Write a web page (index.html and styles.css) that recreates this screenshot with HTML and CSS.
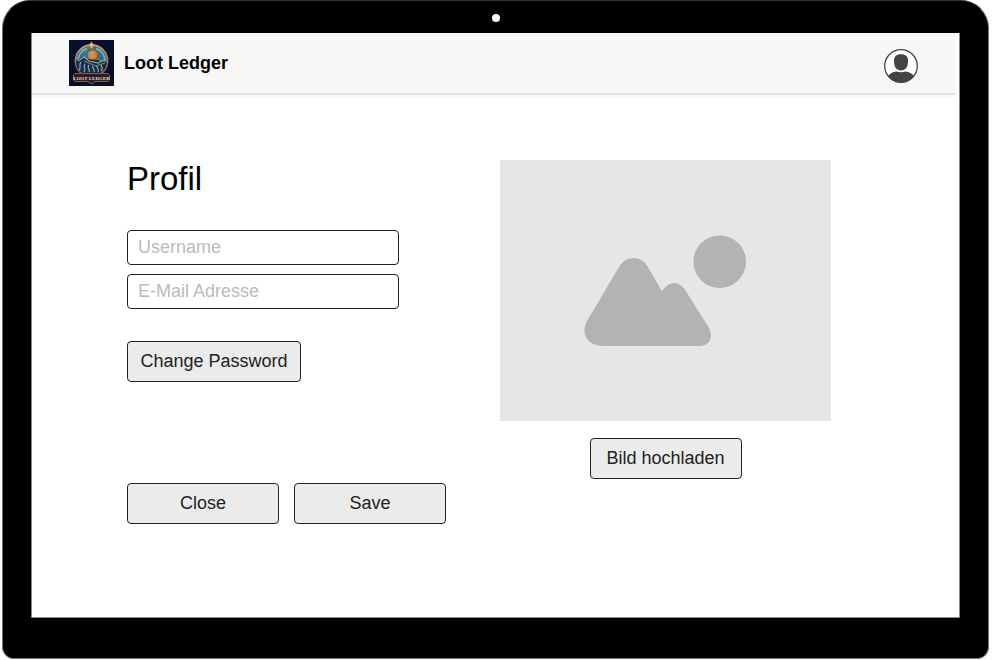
FILE: index.html
```html
<!DOCTYPE html>
<html lang="de">
<head>
<meta charset="utf-8">
<meta name="viewport" content="width=device-width, initial-scale=1">
<title>Loot Ledger</title>
<link rel="stylesheet" href="styles.css">
</head>
<body>
<div class="device">
  <div class="bezel"><span class="camera"></span></div>
  <div class="screen">
    <header class="topbar">
      <a class="brand" href="#">
        <svg class="logo" viewBox="0 0 45 46" aria-hidden="true">
          <defs>
            <linearGradient id="gold" x1="0" y1="0" x2="0" y2="1">
              <stop offset="0" stop-color="#c99a5c"/>
              <stop offset="1" stop-color="#85543a"/>
            </linearGradient>
            <radialGradient id="sea" cx=".5" cy=".3" r=".75">
              <stop offset="0" stop-color="#4a8c9a"/>
              <stop offset=".6" stop-color="#265f80"/>
              <stop offset="1" stop-color="#102746"/>
            </radialGradient>
          </defs>
          <rect width="45" height="46" fill="#06102e"/>
          <circle cx="22.500" cy="21" r="16" fill="url(#sea)" stroke="url(#gold)" stroke-width="1.800"/>
          <path d="M9 21a13.500 13.500 0 0 1 9-12.500M27 8.500a13.500 13.500 0 0 1 9 12.500" fill="none" stroke="#62b5c6" stroke-width="2"/>
          <path d="M22.500 1.500l3 4-3 3.500-3-3.500z" fill="#d99c49"/>
          <circle cx="22.500" cy="5" r="1" fill="#fbe2a0"/>
          <circle cx="23.500" cy="15" r="5.500" fill="#bd8148" stroke="#6d4a32"/>
          <path d="M20.500 13h5M20.500 16h6M23 11v8" stroke="#e0aa62" stroke-width=".8"/>
          <path d="M7 21l6-4 5 2 10 1 10 3-2 6-5 4H13l-5-5z" fill="#172c47"/>
          <path d="M9 21l6-4 5 4 9 2 6-3" fill="none" stroke="#7da9b8" stroke-width="1.200"/>
          <path d="M12 22c-3 4 1 5-2 8M16 24c-3 4 2 4-1 8M20 25c-3 4 2 4 0 7M24 26c-2 3 3 3 1 6M28 25c-1 4 3 3 1 7M32 24c0 4 3 3 0 7" fill="none" stroke="#7aa6ba" stroke-width="1.300"/>
          <path d="M15 21l12 5 9-3M28 19l6 2" fill="none" stroke="#a8754c" stroke-width="1.100"/>
          <path d="M6 33.500h33l1.500 1.500v5L39 41.500H26L22.500 44 19 41.500H6L4.500 40v-5z" fill="#2b1c24" stroke="#94664a" stroke-width=".9"/>
          <text class="logo-text" x="22.500" y="39.500" text-anchor="middle">LOOT LEDGER</text>
        </svg>
        <span class="brand-name">Loot Ledger</span>
      </a>
      <button class="account" type="button" aria-label="Profil">
        <svg class="account-icon" viewBox="0 0 34 34" aria-hidden="true">
          <clipPath id="disc"><circle cx="17" cy="17" r="16.500"/></clipPath>
          <circle cx="17" cy="17" r="16.300" fill="#fff"/>
          <g fill="#444" clip-path="url(#disc)">
            <path d="M17 5.200c5 0 7.200 2.200 7 7.300-.2 5.500-2.200 9-7 9s-6.800-3.500-7-9c-.2-5.100 2-7.300 7-7.300z"/>
            <path d="M3.500 28c1.500-3.500 5-5 9-5.500 2.800.9 6.200.9 9 0 4 .5 7.500 2 9 5.500v7h-27z"/>
          </g>
          <circle cx="17" cy="17" r="16.300" fill="none" stroke="#444" stroke-width="1.300"/>
        </svg>
      </button>
    </header>
    <main class="profile">
      <form class="details">
        <h1 class="title">Profil</h1>
        <div class="fields">
          <input class="field" type="text" placeholder="Username" aria-label="Username">
          <input class="field" type="email" placeholder="E-Mail Adresse" aria-label="E-Mail Adresse">
        </div>
        <button class="btn btn-wide" type="button">Change Password</button>
        <div class="actions">
          <button class="btn" type="button">Close</button>
          <button class="btn" type="button">Save</button>
        </div>
      </form>
      <section class="picture">
        <svg class="placeholder" viewBox="0 0 331 261" role="img" aria-label="Profilbild">
          <rect width="331" height="261" fill="#e6e6e6"/>
          <circle cx="219.700" cy="101.700" r="26.300" fill="#b3b3b3"/>
          <path d="M119 107C126 95 141 95 148 107L162 131.500C168 121 178 120 184.500 129L208.500 167C214 177 210 186 199 186H104C88 186 80 175 87 161Z" fill="#b3b3b3"/>
        </svg>
        <button class="btn" type="button">Bild hochladen</button>
      </section>
    </main>
  </div>
</div>
</body>
</html>
```
FILE: styles.css
```css
* {
  box-sizing: border-box;
}

body {
  margin: 0;
  padding: 0 3px 0 2px;
  background: #fff;
  font-family: "Liberation Sans", Arial, sans-serif;
  font-size: 18px;
  color: #222;
}

.device {
  display: flex;
  flex-direction: column;
  min-height: calc(100vh - 1px);
  padding: 0 28px 40px;
  border: 1px solid #777;
  border-top-color: #333;
  border-radius: 28px 28px 12px 12px;
  background: #000;
}

.bezel {
  display: flex;
  align-items: center;
  justify-content: center;
  height: 32px;
  padding-top: 1px;
}

.camera {
  width: 8px;
  height: 8px;
  border-radius: 50%;
  background: #fff;
}

.screen {
  flex: 1;
  border: 1px solid #888;
  border-top: 0;
  background: #fff;
}

.topbar {
  display: flex;
  align-items: center;
  justify-content: space-between;
  height: 62px;
  margin-right: 4px;
  padding: 0 37px;
  border-bottom: 2px solid #e0e0e0;
  background: #f7f7f7;
  box-shadow: 0 2px #f8f8f8;
}

.brand {
  display: flex;
  align-items: center;
  gap: 10px;
  color: #000;
  font-weight: bold;
  text-decoration: none;
}

.logo {
  width: 45px;
  height: 46px;
}

.logo-text {
  fill: #eadcc4;
  font: bold 5px "Liberation Serif", serif;
}

.account {
  display: flex;
  margin-top: 6px;
  padding: 0;
  border: 0;
  background: none;
}

.account-icon {
  width: 34px;
  height: 34px;
}

.profile {
  display: grid;
  grid-template-columns: 319fr 331fr;
  gap: 54px;
  padding: 65px 128px 64px 95px;
}

.details {
  display: flex;
  flex-direction: column;
}

.title {
  margin: 0 0 32px;
  color: #000;
  font-size: 33px;
  font-weight: normal;
  line-height: 38px;
}

.fields {
  display: grid;
  gap: 9px;
  max-width: 272px;
  margin-bottom: 32px;
}

.field {
  width: 100%;
  height: 35px;
  padding: 0 10px;
  border: 1px solid #222;
  border-radius: 4px;
  background: #fff;
  color: #222;
  font: inherit;
}

.field::placeholder {
  color: #bbb;
}

.btn {
  width: 152px;
  height: 41px;
  padding: 0;
  border: 1px solid #222;
  border-radius: 4px;
  background: #ebebeb;
  color: #222;
  font: inherit;
}

.btn-wide {
  width: 174px;
}

.actions {
  display: flex;
  justify-content: space-between;
  margin-top: 101px;
}

.picture {
  display: flex;
  flex-direction: column;
  align-items: center;
  gap: 17px;
}

.placeholder {
  width: 100%;
}
```
